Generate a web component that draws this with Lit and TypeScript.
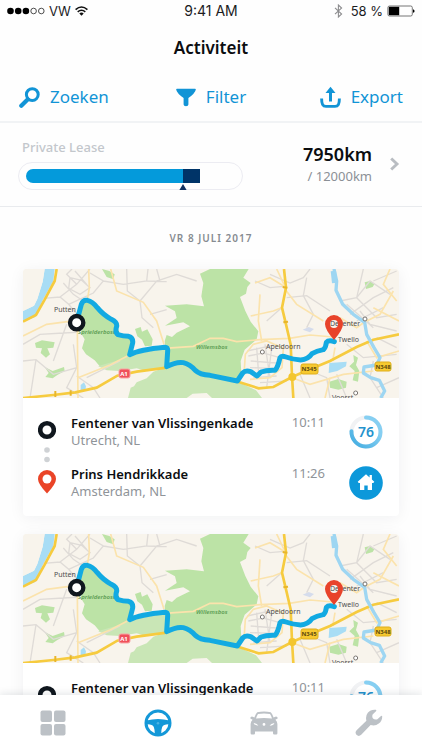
import { LitElement, html, svg, css } from "lit";
import { customElement, property } from "lit/decorators.js";

interface Stop {
  street: string;
  city: string;
  time: string;
}

interface Trip {
  from: Stop;
  to: Stop;
  score: number;
}

const trip: Trip = {
  from: { street: "Fentener van Vlissingenkade", city: "Utrecht, NL", time: "10:11" },
  to: { street: "Prins Hendrikkade", city: "Amsterdam, NL", time: "11:26" },
  score: 76,
};

const trips: Trip[] = [trip, trip];

@customElement("status-bar")
export class StatusBar extends LitElement {
  static styles = css`
    :host {
      display: grid;
      grid-template-columns: 1fr auto 1fr;
      align-items: center;
      height: 22px;
      padding: 0 7px;
      font: 13px/22px Inter, "Liberation Sans", sans-serif;
      color: #1c1c1e;
    }
    .side {
      display: flex;
      align-items: center;
      gap: 4px;
    }
    .end {
      justify-content: flex-end;
    }
    .clock {
      font-size: 14px;
    }
    svg {
      display: block;
    }
  `;

  render() {
    return html`
      <div class="side">
        <svg width="38" height="8" viewBox="0 0 38 8" aria-label="Signaal">
          <circle cx="3.5" cy="4" r="3.3" />
          <circle cx="11.2" cy="4" r="3.3" />
          <circle cx="18.9" cy="4" r="3.3" />
          <circle cx="26.6" cy="4" r="2.8" fill="none" stroke="#222" stroke-width=".8" />
          <circle cx="34.3" cy="4" r="2.8" fill="none" stroke="#222" stroke-width=".8" />
        </svg>
        <span>VW</span>
        <svg width="13" height="10" viewBox="0 0 13 10" aria-label="Wifi">
          <path d="M.6 3.6Q6.5-1.6 12.4 3.6M2.7 5.9Q6.5 2.6 10.3 5.9" fill="none" stroke="#111" stroke-width="1.6" />
          <path d="M4.3 7.4Q6.5 5.6 8.7 7.4L6.5 9.8Z" fill="#111" />
        </svg>
      </div>
      <span class="clock">9:41 AM</span>
      <div class="side end">
        <svg width="9" height="14" viewBox="0 0 9 14" aria-label="Bluetooth">
          <path d="M1 3.8 7.6 10 4.4 13V1L7.6 4 1 10.2" fill="none" stroke="#8d8d8f" stroke-width="1.1" />
        </svg>
        <span>&nbsp;58 %</span>
        <svg width="28" height="12" viewBox="0 0 28 12" aria-label="Batterij">
          <rect x=".9" y="1" width="24.4" height="10" rx="1.6" fill="none" stroke="#666" stroke-width=".9" />
          <rect x="1.8" y="1.8" width="10.4" height="8.4" />
          <path d="M26 4.2q1.6.4 1.6 1.8T26 7.8Z" />
        </svg>
      </div>
    `;
  }
}

@customElement("action-bar")
export class ActionBar extends LitElement {
  static styles = css`
    :host {
      display: grid;
      grid-template-columns: 1fr auto 1fr;
      align-items: center;
      height: 48px;
      padding: 0 19px;
      border-bottom: 2px solid #f1f3f5;
    }
    button {
      display: flex;
      align-items: center;
      gap: 10px;
      padding: 0;
      border: 0;
      background: none;
      color: #1194d6;
      font: 17px/24px "Noto Sans", sans-serif;
      cursor: pointer;
    }
    button:last-child {
      justify-self: end;
    }
    svg {
      display: block;
      flex: none;
    }
  `;

  render() {
    return html`
      <button type="button">
        <svg width="21" height="21" viewBox="0 0 21 21" fill="none" stroke="currentColor">
          <circle cx="13.3" cy="7.6" r="5.9" stroke-width="3" />
          <path d="M8.600 12.400 2.300 18.700" stroke-width="4.200" stroke-linecap="round" />
        </svg>
        Zoeken
      </button>
      <button type="button">
        <svg width="20" height="19" viewBox="0 0 20 19" fill="currentColor">
          <path d="M1 .8h18q1 0 .8 1-.8 3.600-7.400 8.300v6.300q0 1.800-2.400 1.800t-2.400-1.800v-6.300Q1 5.400.2 1.800 0 .8 1 .8Z" />
        </svg>
        Filter
      </button>
      <button type="button">
        <svg width="21" height="22" viewBox="0 0 21 22" fill="none" stroke="currentColor">
          <path d="M1.600 12.600q0 4.200 1 6t3.400 1.800h9q2.400 0 3.400-1.800t1-6" stroke-width="2.900" />
          <path d="M10.500 15.500V5" stroke-width="3" />
          <path d="M10.500.8 15.500 7h-10Z" fill="currentColor" stroke="none" />
        </svg>
        Export
      </button>
    `;
  }
}

@customElement("lease-summary")
export class LeaseSummary extends LitElement {
  static properties = {
    driven: { type: Number },
    expected: { type: Number },
    scale: { type: Number },
  };
  declare driven: number;
  declare expected: number;
  declare scale: number;

  static styles = css`
    :host {
      display: block;
      border-bottom: 1px solid #e9ebee;
      font-family: "Noto Sans", sans-serif;
    }
    a {
      display: flex;
      align-items: center;
      height: 81px;
      padding: 0 22px 2px 18px;
      color: inherit;
      text-decoration: none;
    }
    .usage {
      width: 59%;
      margin-right: auto;
    }
    .name {
      padding-left: 4px;
      font-size: 13px;
      font-weight: 500;
      line-height: 18px;
      color: #c3c7cc;
      margin-bottom: 6px;
    }
    .pill {
      box-sizing: border-box;
      height: 28px;
      padding: 6px 8px 0 7px;
      border: 1px solid #ececf2;
      border-radius: 14px;
    }
    .track {
      display: flex;
      height: 14px;
      border-radius: 7px 0 0 7px;
      overflow: hidden;
    }
    .done {
      background: #049adb;
    }
    .over {
      background: #003468;
    }
    .marker {
      display: flex;
      justify-content: flex-end;
    }
    .marker svg {
      display: block;
      margin: 1px -4px 0 0;
    }
    .numbers {
      margin-right: 17px;
      text-align: right;
    }
    strong {
      display: block;
      font-size: 18px;
      font-weight: 600;
      line-height: 24px;
      color: #0b0d10;
    }
    .total {
      font-size: 13px;
      line-height: 20px;
      color: #8b9096;
    }
    .chevron {
      display: block;
    }
  `;

  render() {
    const done = (this.expected / this.scale) * 100;
    const over = ((this.driven - this.expected) / this.scale) * 100;
    return html`
      <a href="#lease">
        <div class="usage">
          <div class="name">Private Lease</div>
          <div class="pill">
            <div class="track">
              <div class="done" style="width:${done}%"></div>
              <div class="over" style="width:${over}%"></div>
            </div>
            <div class="marker" style="width:${done}%">
              <svg width="8" height="6" viewBox="0 0 8 6"><path d="M4 0 7.600 6H.4Z" fill="#10305f" /></svg>
            </div>
          </div>
        </div>
        <div class="numbers">
          <strong>${this.driven}km</strong>
          <div class="total">/ 12000km</div>
        </div>
        <svg class="chevron" width="11" height="14" viewBox="0 0 11 14">
          <path d="M2.200 1.500 8 7 2.200 12.500" fill="none" stroke="#b9bdc2" stroke-width="2.900" />
        </svg>
      </a>
    `;
  }
}

@customElement("route-map")
export class RouteMap extends LitElement {
  static styles = css`
    :host {
      display: block;
    }
    svg {
      display: block;
      width: 100%;
      height: auto;
    }
    .fine {
      fill: none;
      stroke: #dfdbd7;
      stroke-width: 4;
    }
    .minor {
      fill: none;
      stroke: #fbe3ac;
      stroke-width: 5;
    }
    .major {
      fill: none;
      stroke: #f6cb3f;
      stroke-width: 8;
    }
    .water {
      fill: none;
      stroke: #9ed6f2;
      stroke-linejoin: round;
    }
    .wood {
      fill: #bce3a6;
    }
    .heath {
      fill: #c9e6b6;
    }
    .route {
      fill: none;
      stroke: #12aae2;
      stroke-width: 15;
      stroke-linecap: round;
      stroke-linejoin: round;
    }
    .town {
      fill: #fff;
      stroke: #77736f;
      stroke-width: 3;
    }
    text {
      font-family: "Noto Sans", sans-serif;
    }
    .place {
      font-size: 7px;
      fill: #4f4e4e;
    }
    .forest {
      font-size: 6px;
      font-style: italic;
      font-weight: 600;
      fill: #5c9d54;
    }
    .shield {
      font-size: 6px;
      font-weight: 700;
      text-anchor: middle;
      fill: #5e4a10;
    }
    .motorway {
      fill: #fff;
    }
  `;

  /* Terrain is drawn on a grid three times as fine as the labels. */
  private terrain() {
    return svg`
      <g transform="translate(-13 -8) scale(.333333)">
        <path class="heath" d="M265 316 300 290 355 283 468 262 500 300 470 322 400 328 380 322 330 330 290 328Z" />
        <path class="wood" d="M215 125 240 118 285 165 322 195 328 215 362 228 372 250 356 284 330 296 268 314 254 298 228 280 216 262 224 235 212 215 220 190 210 170Z" />
        <path class="wood" d="M600 24 570 38 580 66 574 106 582 136 530 130 465 134 495 151 500 171 465 194 520 184 540 196 500 215 486 228 470 222 464 240 466 262 476 300 520 306 600 345 684 361 694 336 692 300 704 266 740 235 745 211 722 182 706 150 690 108 708 98 712 78 722 66 700 50 716 24Z" />
        <path class="heath" d="M470 318 430 332 410 352 380 364 372 376 362 380 354 411H530L548 398 590 396 606 411H756L738 388 684 362 600 345 560 335 520 305Z" />
        <path class="wood" d="M276 24 298 30 314 40 310 55 290 48ZM375 204 392 198 396 212 412 205 428 235 425 254 405 256 396 236 382 226ZM75 246 96 238 134 244 130 260 112 262 120 280 108 290 92 276 96 262 78 260ZM104 318 128 330 162 318 164 330 142 342 128 352 106 348 116 336ZM1064 64 1080 60 1094 68 1088 78 1068 84ZM1030 282 1044 290 1038 312 1048 330 1044 362 1028 358 1034 330 1018 316 1032 302ZM958 362 985 354 1010 362 1008 380 985 386 960 380Z" />
        <path d="M39 150V182L76 168 98 118 130 60 134 24H104L98 62 82 114 72 134Z" fill="#a8ddf5" />
        <path d="M39 24H104L98 62 82 114 72 134 39 150Z" fill="#f8f4ec" />
        <path d="M958 306 1010 302 1008 316 982 330 956 336ZM212 372 222 364 228 376 226 388 212 388Z" fill="#a8ddf5" />
        <path d="M878 206 896 198 912 204 900 214Z" fill="#d5dcec" />
        <path class="fine" d="M150 108 200 70 240 24M100 112 150 108 176 130 205 165M176 130 250 96 280 60 240 36M200 70 170 40 186 24M180 50 215 58 240 80 210 100 176 82ZM160 66 190 100 220 120M195 30 230 70M280 60 340 70 410 60 414 24M350 24 352 90 390 120 440 60 500 40 560 60M410 60 470 62M390 120 396 170 430 200M39 250 90 220 160 216 200 214M39 300 78 296 130 340 200 320 190 250M60 411 78 296M200 320 170 380 220 411M170 190 130 300M200 345 250 380 270 411M230 350 330 300M420 160 470 146M440 24 450 60" />
        <path class="fine" d="M780 40 840 66 880 50 900 24M735 60 780 80 822 76M830 110 890 104 960 150M770 180 815 140M890 50 880 104 910 160 890 200M990 120 1040 110 1080 60 1140 100M1020 160 1090 110 1150 80M1060 24 1040 110 1100 170 1160 160M1090 60 1160 30M1010 130 1090 200M1040 180 1120 140M1050 150 1080 190 1160 210M1100 230 1160 260M1010 250 1060 290 1160 280M870 340 900 411M900 330 950 350 960 411M1090 300 1080 350 1120 411M1100 380 1167 350M980 340 1010 411" />
        <path class="fine" d="M715 285 760 276 810 290 800 330M722 300 800 306M740 260 746 340M765 250 780 350M785 262 770 380M720 320 790 322M712 270 800 250M730 350 800 345M750 365 830 360" />
        <path class="minor" d="M236 24 238 80 232 118M202 205 204 411M39 225 110 190 200 178M204 350 300 312 358 282M302 24 320 90 400 124 440 180 462 250M462 262 550 256 600 232 640 232 680 242 750 236 838 232M735 66 780 50 822 76M750 100 745 180 755 240M722 165 790 150 815 140M838 232 900 222 970 228M820 78 860 130 940 180M800 24 822 70M968 300 975 260M1140 24 1120 70 1160 120M1150 90 1110 160 1070 180M1070 240 1100 290 1167 270M702 340 706 280 730 250 770 240 820 262 816 320 780 350 720 355M846 350 900 370 1000 340 1090 330M960 350 945 411M1090 140 1167 180M990 170 1040 200 1068 180" />
        <path class="major" d="M39 182 78 162 104 116 134 60 140 24" stroke-width="6" />
        <path class="major" d="M39 411 130 402 196 394 260 380 322 344 380 332 470 320M822 24 828 80 816 140 828 190 842 250 846 345 850 411M684 362 746 382 790 378 846 348 900 325 960 300 1040 258 1090 236 1167 220" />
        <circle cx="847" cy="348" r="12" fill="#f3c62f" />
        <path d="M136 390v18M182 388v16M818 78l14 2M820 184l14-2" stroke="#e9b62a" stroke-width="6" />
        <path class="water" d="M972 24 980 60 978 88 998 130 1030 160 1064 184 1070 220 1092 260 1110 290 1100 312 1062 318 1060 336 1082 350 1108 358 1124 390 1112 411" stroke-width="10" />
        <path class="water" d="M970 30 974 66" stroke-width="16" />
        <circle class="town" cx="757" cy="273" r="6" />
        <circle class="town" cx="1065" cy="174" r="6" />
        <circle class="town" cx="1037" cy="396" r="6" />
      </g>
    `;
  }

  render() {
    return html`
      <svg viewBox="0 0 376 129" role="img" aria-label="Kaart van de route">
        <rect width="376" height="129" fill="#f8f4ec" />
        ${this.terrain()}
        <text class="place" x="31" y="43">Putten</text>
        <text class="forest" x="55" y="65">Sprielderbosch</text>
        <text class="forest" x="173" y="80">Willemsbos</text>
        <text class="place" x="243" y="80">Apeldoorn</text>
        <text class="place" x="307" y="57">Deventer</text>
        <text class="place" x="315" y="73">Twello</text>
        <text class="place" x="309" y="131">Voorst</text>
        <rect x="96" y="100" width="11" height="9" rx="2" fill="#f0505a" stroke="#f8a5a5" />
        <text class="shield motorway" x="101" y="107">A1</text>
        <rect x="278" y="95" width="17" height="10" rx="2" fill="#f7c92f" stroke="#dfae1c" />
        <text class="shield" x="286" y="102">N345</text>
        <rect x="352" y="93" width="16" height="9" rx="2" fill="#f7c92f" stroke="#dfae1c" />
        <text class="shield" x="360" y="100">N348</text>
        <g transform="translate(-13 -8) scale(.333333)">
          <path
            class="route"
            d="M204 168 214 130Q219 116 232 118 248 121 262 140 280 162 304 175 322 184 320 196 314 214 324 221 340 226 356 226 370 230 368 246L359 281Q390 266 464 259 474 260 473 270L470 317Q500 301 520 305 540 310 556 328 570 341 600 343L682 360 698 336Q706 327 722 332L741 345 753 333Q770 327 795 328 804 318 810 290 814 283 828 288 850 296 872 297 894 296 906 278 920 270 940 266 948 258 949 244 956 236 973 242"
          />
          <circle cx="200" cy="185" r="20" fill="#fff" stroke="#10171e" stroke-width="13" />
          <path
            fill-rule="evenodd"
            d="M972 237Q945 206 945 189A27 27 0 0 1 999 189Q999 206 972 237ZM972 177A12 12 0 0 0 972 201 12 12 0 0 0 972 177Z"
            fill="#e8432a"
          />
        </g>
      </svg>
    `;
  }
}

@customElement("trip-card")
export class TripCard extends LitElement {
  @property({ attribute: false }) trip!: Trip;

  static styles = css`
    :host {
      display: block;
      overflow: hidden;
      border-radius: 4px;
      background: #fff;
      box-shadow: 0 2px 16px rgba(20, 30, 50, 0.06);
      font-family: "Noto Sans", sans-serif;
    }
    .body {
      display: flex;
      align-items: center;
      gap: 15px;
      padding: 16px 16px 16px 15px;
    }
    svg {
      display: block;
      flex: none;
    }
    .stops {
      flex: 1;
      display: grid;
      gap: 16px;
    }
    .stop {
      display: grid;
      grid-template-columns: 1fr auto 34px;
      column-gap: 24px;
      height: 35px;
    }
    .street {
      font-size: 13px;
      font-weight: 600;
      line-height: 18px;
      color: #0c0e11;
      white-space: nowrap;
    }
    .city,
    .time {
      font-size: 13px;
      line-height: 17px;
      color: #8f9499;
    }
    .score {
      font-size: 14px;
      font-weight: 600;
      text-anchor: middle;
      fill: #2492cd;
    }
  `;

  private stop(stop: Stop, badge: unknown) {
    return html`
      <div class="stop">
        <div>
          <div class="street">${stop.street}</div>
          <div class="city">${stop.city}</div>
        </div>
        <div class="time">${stop.time}</div>
        ${badge}
      </div>
    `;
  }

  render() {
    const { from, to, score } = this.trip;
    const scoreRing = html`
      <svg width="34" height="35" viewBox="0 0 34 35">
        <defs>
          <linearGradient id="ring" x1="1" y1="0" x2="0" y2="1">
            <stop offset=".3" stop-color="#86cff2" />
            <stop offset="1" stop-color="#3fabe0" />
          </linearGradient>
        </defs>
        <circle cx="17" cy="18" r="14.500" fill="none" stroke="#f1f2f4" stroke-width="4" />
        <path d="M17 3.500A14.500 14.500 0 1 1 2.500 17.200" fill="none" stroke="url(#ring)" stroke-width="4" stroke-linecap="round" />
        <text class="score" x="17" y="23">${score}</text>
      </svg>
    `;
    const home = html`
      <svg width="34" height="35" viewBox="0 0 34 35" role="img" aria-label="Thuis">
        <circle cx="17" cy="18" r="16.800" fill="#0c98da" />
        <path
          d="M17 9.300 20.600 12.500V10h2.300v4.500L25.300 16.700 24.300 18H23v7h-4.300v-4.500h-3.400V25H11v-7H9.700L8.700 16.700Z"
          fill="#fff"
        />
      </svg>
    `;
    return html`
      <route-map></route-map>
      <div class="body">
        <svg width="18" height="74" viewBox="0 0 18 74">
          <circle cx="9" cy="10" r="6.800" fill="none" stroke="#10171e" stroke-width="4.600" />
          <circle cx="9" cy="30" r="2.800" fill="#cfd2d5" />
          <circle cx="9" cy="39.500" r="2.800" fill="#cfd2d5" />
          <path d="M9 73.500Q0 64 0 59A9 9 0 0 1 18 59Q18 64 9 73.500Z" fill="#ea4427" />
          <circle cx="9" cy="59" r="4.500" fill="#fff" />
        </svg>
        <div class="stops">${this.stop(from, scoreRing)} ${this.stop(to, home)}</div>
      </div>
    `;
  }
}

@customElement("tab-bar")
export class TabBar extends LitElement {
  static styles = css`
    :host {
      display: block;
      background: #fff;
      box-shadow: 0 -1px 8px rgba(20, 30, 50, 0.12);
    }
    nav {
      display: grid;
      grid-template-columns: repeat(4, 1fr);
      height: 55px;
    }
    a {
      display: flex;
      align-items: center;
      justify-content: center;
      color: #bcc1c6;
    }
    .current {
      color: #1498d8;
    }
    svg {
      display: block;
    }
  `;

  render() {
    return html`
      <nav>
        <a href="#overview" aria-label="Overzicht">
          <svg width="26" height="26" viewBox="0 0 26 26" fill="currentColor">
            <rect x=".5" y=".5" width="11.500" height="11.500" rx="2" />
            <rect x="14" y=".5" width="11.500" height="11.500" rx="2" />
            <rect x=".5" y="14" width="11.500" height="11.500" rx="2" />
            <rect x="14" y="14" width="11.500" height="11.500" rx="2" />
          </svg>
        </a>
        <a class="current" href="#activity" aria-label="Activiteit" aria-current="page">
          <svg width="28" height="28" viewBox="0 0 28 28" fill="currentColor">
            <circle cx="14" cy="14" r="12" fill="none" stroke="currentColor" stroke-width="3" />
            <path d="M2.500 11.600Q14 8.600 25.500 11.600L25.600 15.200Q19.600 14.800 18.200 18 17 21 17.200 25.600H10.800Q11 21 9.800 18 8.400 14.800 2.400 15.200Z" />
            <circle cx="14" cy="14.200" r="1.300" fill="#4bb2e3" />
          </svg>
        </a>
        <a href="#car" aria-label="Auto">
          <svg width="28" height="24" viewBox="0 0 28 24" fill="currentColor">
            <path
              fill-rule="evenodd"
              d="M7.200 1.200Q14-.2 20.800 1.200 22.200 2.400 23.600 6.600L26 5.600Q28 6 27.600 7.600L25.400 8.800Q27.400 10.600 27.400 13V22.200Q27.400 23.400 26.200 23.400H24.200Q23 23.400 23 22.200V20.400H5V22.200Q5 23.400 3.800 23.400H1.800Q.6 23.400.6 22.200V13Q.6 10.600 2.600 8.800L.4 7.600Q0 6 2 5.600L4.400 6.600Q5.800 2.400 7.200 1.200ZM8 3Q6.800 4.600 6 7.600 14 6.400 22 7.600 21.200 4.600 20 3 14 2 8 3ZM3.600 12Q4.400 14.600 8.400 14.800 7.400 12.600 3.600 12ZM24.400 12Q20.600 12.600 19.600 14.800 23.600 14.600 24.400 12ZM14 12A1.400 1.400 0 1 0 14 14.800 1.400 1.400 0 1 0 14 12Z"
            />
          </svg>
        </a>
        <a href="#service" aria-label="Service">
          <svg width="28" height="28" viewBox="0 0 28 28" fill="currentColor">
            <path
              d="M20.800.8Q15.800.2 12.800 3.800 10.200 7.200 11.400 11.800L1.600 21.200Q-.4 23.400 1.400 25.800 3.800 28 6.200 25.800L15.600 16Q20.200 17.400 23.800 14.600 27.400 11.600 27.200 7.200 26.800 6.200 26 7L22.400 10.200Q19.600 10.800 18 9.400 16.800 7.800 17.600 5.400L21 2.200Q21.800 1.200 20.800.8Z"
            />
          </svg>
        </a>
      </nav>
    `;
  }
}

@customElement("app-root")
export class AppRoot extends LitElement {
  static styles = css`
    :host {
      display: flex;
      flex-direction: column;
      height: 100vh;
      background: #fefefe;
      font-family: "Noto Sans", sans-serif;
    }
    h1 {
      margin: 0;
      padding: 13px 0 12px;
      font-size: 17px;
      font-weight: 600;
      line-height: 26px;
      text-align: center;
      color: #0b0d10;
    }
    main {
      flex: 1;
      min-height: 0;
      overflow-y: auto;
      scrollbar-width: none;
    }
    h2 {
      margin: 0;
      padding: 22px 0;
      font-size: 10px;
      font-weight: 600;
      line-height: 18px;
      letter-spacing: 1px;
      text-align: center;
      color: #868b91;
    }
    .trips {
      display: grid;
      gap: 18px;
      padding: 0 23px 18px;
    }
    tab-bar {
      position: relative;
      flex: none;
    }
  `;

  render() {
    return html`
      <status-bar></status-bar>
      <h1>Activiteit</h1>
      <action-bar></action-bar>
      <lease-summary .driven=${7950} .expected=${7160} .scale=${9500}></lease-summary>
      <main>
        <h2>VR 8 JULI 2017</h2>
        <div class="trips">${trips.map((t) => html`<trip-card .trip=${t}></trip-card>`)}</div>
      </main>
      <tab-bar></tab-bar>
    `;
  }
}
